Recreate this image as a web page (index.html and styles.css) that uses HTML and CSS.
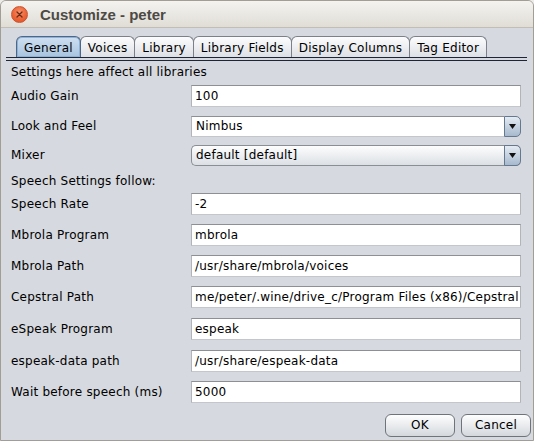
FILE: index.html
```html
<!DOCTYPE html>
<html>
<head>
<meta charset="utf-8">
<link rel="stylesheet" href="styles.css">
</head>
<body>
<div class="window">
  <div class="titlebar">
    <span class="close"><svg width="7" height="7" viewBox="0 0 7 7"><path d="M1 1L6 6M6 1L1 6" stroke="#6a2a14" stroke-width="1.3" stroke-linecap="round"/></svg></span>
    <span class="title">Customize - peter</span>
  </div>
  <div class="tabs">
    <div class="tab selected">General</div>
    <div class="tab">Voices</div>
    <div class="tab">Library</div>
    <div class="tab">Library Fields</div>
    <div class="tab">Display Columns</div>
    <div class="tab">Tag Editor</div>
  </div>
  <div class="tabline"></div>
  <div class="form">
    <div class="note">Settings here affect all libraries</div>
    <div class="row first"><span class="label">Audio Gain</span><div class="field">100</div></div>
    <div class="row combo"><span class="label">Look and Feel</span>
      <div class="combo-edit"><div class="cfield">Nimbus</div><div class="arrow"><svg width="7" height="5" viewBox="0 0 7 5"><path d="M0 0H7L3.5 5Z" fill="#111"/></svg></div></div>
    </div>
    <div class="row combo tight"><span class="label">Mixer</span>
      <div class="combo-full"><div class="ctext">default [default]</div><div class="arrow"><svg width="7" height="5" viewBox="0 0 7 5"><path d="M0 0H7L3.5 5Z" fill="#111"/></svg></div></div>
    </div>
    <div class="note speech">Speech Settings follow:</div>
    <div class="row after-note"><span class="label">Speech Rate</span><div class="field">-2</div></div>
    <div class="row"><span class="label">Mbrola Program</span><div class="field">mbrola</div></div>
    <div class="row"><span class="label">Mbrola Path</span><div class="field">/usr/share/mbrola/voices</div></div>
    <div class="row"><span class="label">Cepstral Path</span><div class="field">me/peter/.wine/drive_c/Program Files (x86)/Cepstral</div></div>
    <div class="row wide"><span class="label">eSpeak Program</span><div class="field">espeak</div></div>
    <div class="row wide"><span class="label">espeak-data path</span><div class="field">/usr/share/espeak-data</div></div>
    <div class="row"><span class="label">Wait before speech (ms)</span><div class="field">5000</div></div>
  </div>
  <div class="buttons">
    <div class="btn">OK</div>
    <div class="btn">Cancel</div>
  </div>
</div>
</body>
</html>
```
FILE: styles.css
```css
html, body {
  margin: 0;
  padding: 0;
}
body {
  width: 534px;
  height: 441px;
  background: #eeece8;
  font-family: "DejaVu Sans", sans-serif;
  font-size: 12px;
  letter-spacing: 0.22px;
  color: #000;
  overflow: hidden;
}
.window {
  box-sizing: border-box;
  width: 534px;
  height: 441px;
  border: 1px solid #a39e95;
  border-radius: 6px 6px 0 0;
  background: #d6d9df;
  overflow: hidden;
  display: flex;
  flex-direction: column;
}
.titlebar {
  height: 26px;
  flex: none;
  border-bottom: 1px solid #c3beb5;
  background: linear-gradient(#f4f3f0, #e0ddd6);
  display: flex;
  align-items: flex-start;
  padding-left: 10px;
}
.close {
  box-sizing: border-box;
  width: 17px;
  height: 17px;
  margin-top: 5px;
  border-radius: 50%;
  background: radial-gradient(circle at 50% 35%, #f7906a 0%, #ec6436 55%, #d9502a 100%);
  border: 1px solid #c9532f;
  display: flex;
  align-items: center;
  justify-content: center;
}
.title {
  margin-left: 12px;
  padding-top: 5px;
  line-height: 17px;
  font-family: "Liberation Sans", Arial, sans-serif;
  font-weight: bold;
  font-size: 15px;
  letter-spacing: 0;
  color: #4d4a45;
}
.tabs {
  display: flex;
  flex: none;
  margin: 8px 6px 0 5px;
  padding-left: 10px;
  height: 21px;
}
.tab {
  box-sizing: border-box;
  height: 21px;
  padding: 3px 7px 0;
  line-height: 17px;
  border: 1px solid #7c8088;
  border-bottom: 0;
  border-radius: 6px 6px 0 0;
  background: linear-gradient(#fcfcfd, #dde0e5);
  margin-left: -1px;
  white-space: nowrap;
}
.tab:first-child {
  margin-left: 0;
}
.tab.selected {
  border-color: #4f6684;
  background: linear-gradient(#cfe0f1, #a8c3df);
  box-shadow: inset 0 0 0 1px #8db2d9;
  position: relative;
  z-index: 1;
}
.tabline {
  flex: none;
  margin: 0 6px 0 5px;
  height: 2px;
  border-top: 1px solid #1d2635;
  border-bottom: 1px solid #1d2635;
}
.form {
  display: flex;
  flex-direction: column;
  padding-left: 10px;
}
.note {
  height: 22px;
  line-height: 22px;
}
.note.speech {
  margin-top: 4px;
}
.row {
  display: flex;
  height: 22px;
  margin-top: 9px;
}
.row.first {
  margin-top: 2px;
}
.row.combo {
  height: 21px;
}
.row.tight {
  margin-top: 8px;
}
.row.after-note {
  margin-top: 1px;
}
.row.wide {
  margin-top: 10px;
}
.label {
  width: 180px;
  flex: none;
  line-height: 22px;
  white-space: nowrap;
}
.combo .label {
  line-height: 21px;
}
.field {
  box-sizing: border-box;
  width: 330px;
  height: 22px;
  border: 1px solid;
  border-color: #8c8f93 #b1b4b9 #c3c6ca #b1b4b9;
  background: #fff;
  padding: 0 3px;
  line-height: 20px;
  white-space: nowrap;
  overflow: hidden;
}
.combo-edit {
  display: flex;
  width: 330px;
  height: 21px;
}
.cfield {
  box-sizing: border-box;
  flex: 1;
  height: 21px;
  border: 1px solid;
  border-color: #8c8f93 #b1b4b9 #c3c6ca #b1b4b9;
  border-right: 0;
  background: #fff;
  padding: 0 4px;
  line-height: 19px;
}
.arrow {
  box-sizing: border-box;
  flex: none;
  width: 17px;
  height: 21px;
  border: 1px solid #66788e;
  border-radius: 0 5px 5px 0;
  background: linear-gradient(#e4ebf3, #a7b9ce);
  display: flex;
  align-items: center;
  justify-content: center;
}
.combo-full {
  box-sizing: border-box;
  display: flex;
  width: 330px;
  height: 21px;
  border: 1px solid #8a8f96;
  border-right: 0;
  border-radius: 5px;
  background: linear-gradient(#fdfdfd, #dce0e5);
}
.combo-full .arrow {
  height: 21px;
  margin-top: -1px;
}
.ctext {
  flex: 1;
  padding-left: 4px;
  line-height: 19px;
}
.buttons {
  display: flex;
  justify-content: flex-end;
  gap: 6px;
  margin-top: 11px;
  padding-right: 2px;
}
.btn {
  box-sizing: border-box;
  width: 70px;
  height: 23px;
  border: 1px solid #6f747b;
  border-radius: 6px;
  background: linear-gradient(#fefefe, #d4d8dd);
  text-align: center;
  line-height: 21px;
}
```
